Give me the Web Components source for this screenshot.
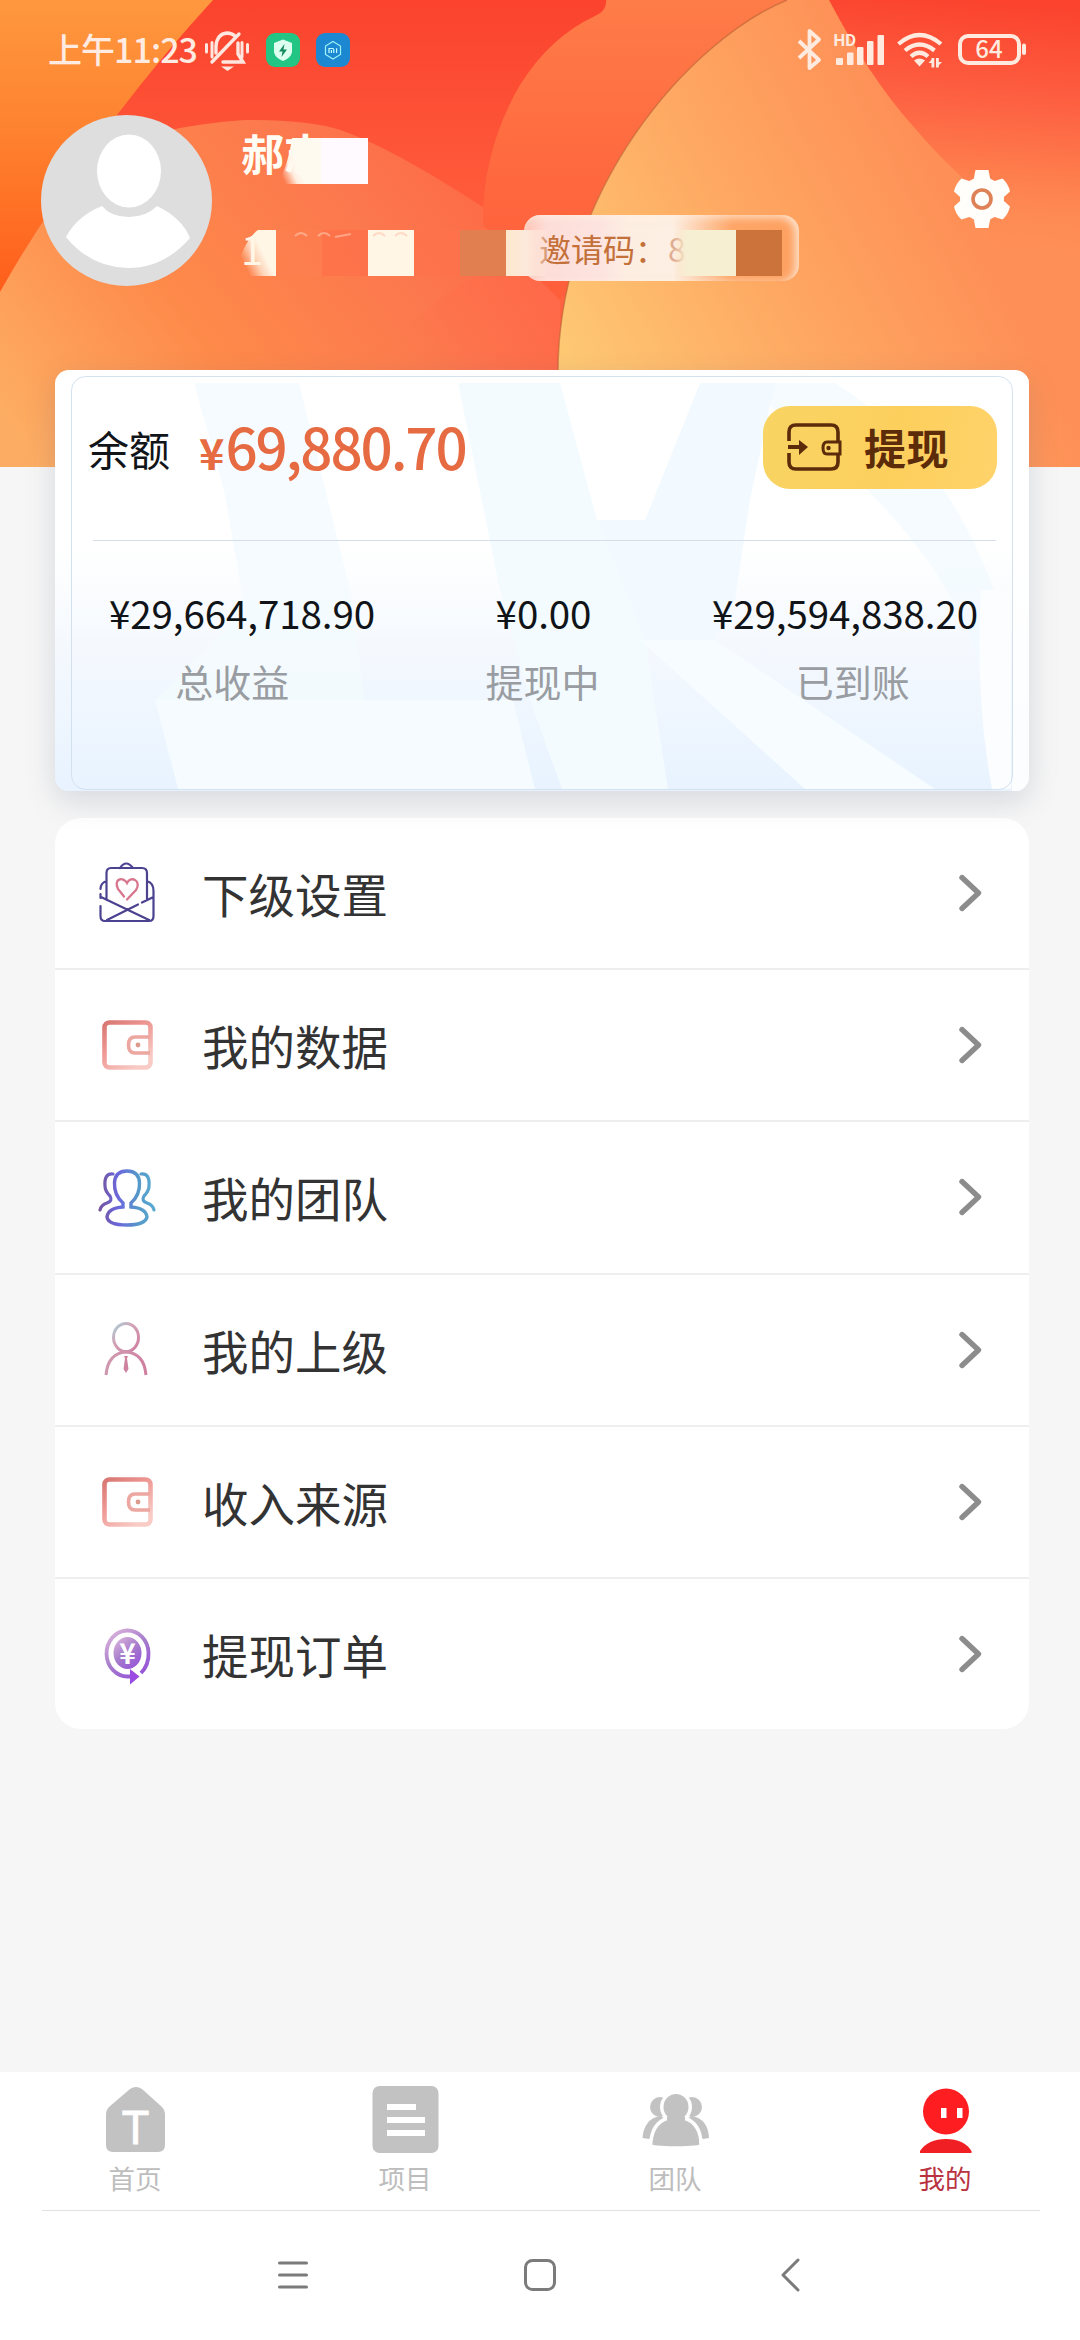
<!DOCTYPE html>
<html lang="zh-CN">
<head>
<meta charset="utf-8">
<title>我的</title>
<style>
html,body{margin:0;padding:0}
body{width:1080px;height:2340px;overflow:hidden;background:#f6f6f6;font-family:"Noto Sans CJK SC","Noto Sans",sans-serif}
</style>
</head>
<body>
<app-screen>
  <status-bar></status-bar>
  <profile-header></profile-header>
  <balance-card></balance-card>
  <menu-list>
    <menu-row icon="mail">下级设置</menu-row>
    <menu-row icon="wallet">我的数据</menu-row>
    <menu-row icon="team">我的团队</menu-row>
    <menu-row icon="boss">我的上级</menu-row>
    <menu-row icon="wallet">收入来源</menu-row>
    <menu-row icon="order" last>提现订单</menu-row>
  </menu-list>
  <tab-bar slot="bottom">
    <tab-item icon="home">首页</tab-item>
    <tab-item icon="project">项目</tab-item>
    <tab-item icon="group">团队</tab-item>
    <tab-item icon="mine" active>我的</tab-item>
  </tab-bar>
  <system-nav slot="bottom"></system-nav>
</app-screen>
<script>
const define = (name, html) => customElements.define(name, class extends HTMLElement {
  constructor() {
    super();
    this.attachShadow({mode: 'open'}).innerHTML = typeof html === 'function' ? html(this) : html;
  }
});

define('hero-art', `
<style>:host{display:block}svg{display:block}</style>
<svg width="1080" height="467" viewBox="0 0 1080 467">
  <defs>
    <linearGradient id="base" x1="0" y1="0" x2="0" y2="1"><stop offset="0" stop-color="#fb432e"/><stop offset=".5" stop-color="#ff5f3d"/><stop offset="1" stop-color="#ff6c48"/></linearGradient>
    <linearGradient id="left" x1="0" y1="0" x2="0" y2="1"><stop offset="0" stop-color="#fe983e"/><stop offset=".45" stop-color="#fe822f"/><stop offset="1" stop-color="#ff5e1b"/></linearGradient>
    <linearGradient id="dome" gradientUnits="userSpaceOnUse" x1="20" y1="440" x2="430" y2="130"><stop offset="0" stop-color="#fdad63"/><stop offset=".4" stop-color="#fe8a4a"/><stop offset=".8" stop-color="#fc774e"/><stop offset="1" stop-color="#fd6c47"/></linearGradient>
    <linearGradient id="fade" gradientUnits="userSpaceOnUse" x1="430" y1="380" x2="560" y2="300"><stop offset="0" stop-color="#ff7048" stop-opacity="0"/><stop offset="1" stop-color="#ff6a4a"/></linearGradient>
    <linearGradient id="band" x1="0" y1="0" x2="0" y2="1"><stop offset="0" stop-color="#fe7c48"/><stop offset=".5" stop-color="#ff6b40"/><stop offset="1" stop-color="#ff5d3b"/></linearGradient>
    <linearGradient id="sun" gradientUnits="userSpaceOnUse" x1="560" y1="350" x2="930" y2="150"><stop offset="0" stop-color="#fec873"/><stop offset=".5" stop-color="#fea963"/><stop offset="1" stop-color="#fe8f56"/></linearGradient>
    <linearGradient id="corner" gradientUnits="userSpaceOnUse" x1="960" y1="0" x2="940" y2="250"><stop offset="0" stop-color="#fb432e"/><stop offset=".35" stop-color="#fd5d40"/><stop offset=".65" stop-color="#fe7b4c"/><stop offset="1" stop-color="#fe8d55" stop-opacity="0"/></linearGradient>
  </defs>
  <rect width="1080" height="467" fill="url(#base)"/>
  <path d="M0 0H213Q165 52 117 115Q45 212 0 292Z" fill="url(#left)"/>
  <path d="M0 292Q45 212 95 150Q170 125 245 120Q310 120 340 130Q400 150 520 232Q560 280 560 467H0Z" fill="url(#dome)"/>
  <path d="M330 467Q370 300 560 240V467Z" fill="url(#fade)"/>
  <path d="M606 0Q607 11 595 16Q550 37 520 85Q482 150 483 225L560 300L800 0Z" fill="url(#band)"/>
  <path d="M787 0C690 40 557 190 558 375V467H1080V0Z" fill="url(#sun)"/>
  <path d="M787 0C690 40 557 190 558 375" fill="none" stroke="#b66336" stroke-opacity=".6" stroke-width="1.4"/>
  <path d="M829 0Q870 78 912 125Q940 158 965 180L1000 260H1080V0Z" fill="url(#corner)"/>
</svg>`);

define('app-screen', `
<style>
:host{display:flex;flex-direction:column;width:1080px;height:2340px;position:relative;background:#f6f6f6;isolation:isolate}
hero-art{position:absolute;left:0;top:0;z-index:-1}
main{flex:1;display:flex;flex-direction:column}
footer{background:#fff;height:268px;display:flex;flex-direction:column}
</style>
<hero-art></hero-art>
<main><slot></slot></main>
<footer><slot name="bottom"></slot></footer>`);

define('status-bar', `
<style>
:host{display:flex;height:100px;box-sizing:border-box;align-items:center;justify-content:space-between;padding:0 53px 0 48px;color:#ffebe2}
div{display:flex;align-items:center}
.time{font-size:34px;line-height:50px;font-weight:500;width:152px;white-space:nowrap;letter-spacing:-.95px;margin-top:-2px}
svg{display:block;overflow:visible}
text{font-family:"Noto Sans CJK SC",sans-serif;font-weight:500}
.app{margin-left:16px}
</style>
<div>
  <span class="time">上午11:23</span>
  <svg style="margin-left:4px" width="46" height="42" viewBox="204 29 46 42" fill="none" stroke="#ffe6df" stroke-width="3.4" stroke-linecap="round">
    <path d="M206.500 44.500V52M212 42.500V57M242 42.500V57M247.500 44.500V52" stroke-width="3"/>
    <path d="M212 62L239 34"/>
    <path d="M216 53V46Q217 34 227 33Q232 33 235 36" />
    <path d="M238 43V54L243 62H223"/>
    <path d="M221 66.500H234L227.500 71Z" fill="#ffe6df" stroke="none"/>
  </svg>
  <svg class="app" width="34" height="34" viewBox="0 0 34 34"><rect width="34" height="34" rx="9" fill="#22c583"/><path d="M17 6.500L26 10V19Q25 25 17 28Q9 25 8 19V10Z" fill="#dcfff0"/><path d="M18.500 11L13 18.500H16.500L15.500 24L21 16.500H17.500Z" fill="#138b5c"/></svg>
  <svg class="app" width="34" height="34" viewBox="0 0 34 34"><rect width="34" height="34" rx="9" fill="#1c88d2"/><path d="M17 8.500L24.500 13V21.500L17 26L9.500 21.500V13Z" fill="none" stroke="#9ff2f2" stroke-width="1.200"/><path d="M13 20V15.500H16.500Q17.800 15.500 17.800 17V20M15.400 17V20M20.600 15.300V20" fill="none" stroke="#c4ffff" stroke-width="1.200"/></svg>
</div>
<div>
  <svg width="230" height="42" viewBox="796 29 230 42" fill="none" stroke="#ffeadf" stroke-linejoin="round">
    <path d="M798 41L818 60L808.500 68V31L818 39.500L798 58" stroke-width="3.800"/>
    <g fill="#ffeadf" stroke="none">
      <text x="832.500" y="45.500" font-size="16.500" style="font-family:Roboto,sans-serif;font-weight:700">HD</text>
      <rect x="835" y="58" width="7" height="7" rx="1"/><rect x="846" y="52.500" width="6.500" height="12.500" rx="1"/><rect x="856" y="47" width="6.500" height="18" rx="1"/><rect x="866" y="41" width="6.500" height="24" rx="1"/><rect x="876.500" y="35" width="6.500" height="30" rx="1"/>
      <path d="M913 60.500Q918.500 56.500 924 60.500L918.500 66.500Z"/>
      <path d="M927.500 63L932 58V63ZM941 62L936 67V62Z"/>
      <rect x="930.500" y="58" width="2.800" height="9.500"/><rect x="935" y="58" width="2.800" height="9.500"/>
    </g>
    <path d="M897.500 44Q918.500 26 940 44M904 50.500Q918.500 38.500 933.500 50.500M910 56.500Q918.500 49 927 56.500" stroke-width="4.200"/>
    <rect x="959" y="36" width="59" height="27" rx="8" stroke-width="4"/>
    <path d="M1023 45.500V53" stroke-width="4" stroke-linecap="round"/>
    <text x="988" y="58" text-anchor="middle" font-size="24" fill="#ffeadf" stroke="none">64</text>
  </svg>
</div>`);

define('mosaic-cover', `
<style>:host{display:block}svg{display:block}</style>
<svg width="580" height="160" viewBox="230 130 580 160">
  <defs>
    <linearGradient id="a" gradientUnits="userSpaceOnUse" x1="279" y1="170" x2="296" y2="162"><stop offset="0" stop-color="#fff8ec" stop-opacity="0"/><stop offset=".6" stop-color="#fffaf0" stop-opacity=".9"/><stop offset="1" stop-color="#fffaf0"/></linearGradient>
    <linearGradient id="b" gradientUnits="userSpaceOnUse" x1="240" y1="256" x2="260" y2="246"><stop offset="0" stop-color="#fff6e6" stop-opacity="0"/><stop offset="0.550" stop-color="#fff6e6" stop-opacity=".7"/><stop offset="1" stop-color="#fff6e6"/></linearGradient>
    <linearGradient id="c" x1="0" x2="1"><stop offset="0" stop-color="#fde7cd"/><stop offset=".5" stop-color="#fde9dc"/><stop offset="1" stop-color="#fde9dc" stop-opacity=".3"/></linearGradient>
    <linearGradient id="d" x1="0" x2="1"><stop offset="0" stop-color="#f8eed2" stop-opacity="0"/><stop offset=".2" stop-color="#f7efd3"/><stop offset="1" stop-color="#f6efd1"/></linearGradient>
  </defs>
  <path d="M278 184Q289 162 292 138H322V184Z" fill="url(#a)"/>
  <rect x="321" y="138" width="47" height="46" fill="#fffaff"/>
  <path d="M234 276Q244 240 258 230H276V276Z" fill="url(#b)"/>
  <rect x="276" y="230" width="46" height="46" fill="#fe7e50" opacity=".65"/>
  <rect x="322" y="230" width="46" height="46" fill="#fe704a" opacity=".75"/>
  <rect x="368" y="230" width="46" height="46" fill="#fff6e6"/>
  <rect x="414" y="230" width="46" height="46" fill="#fe724b" opacity=".7"/>
  <rect x="460" y="230" width="46" height="46" fill="#e27f50"/>
  <rect x="506" y="230" width="41" height="46" fill="url(#c)"/>
  <rect x="674" y="230" width="62" height="46" fill="url(#d)"/>
  <rect x="736" y="230" width="46" height="46" fill="#cb733a"/>
  <g fill="none" stroke="#ffc6ae" stroke-width="2" opacity=".6">
    <path d="M295 236Q301 230 307 236M318 236Q324 230 330 236M335 237L351 234M373 236Q379 230 385 236M395 236Q401 230 407 236"/>
  </g>
</svg>`);

define('profile-header', `
<style>
:host{display:flex;position:relative;height:270px;padding:0 66px 0 41px;align-items:flex-start}
.avatar{margin-top:15px;flex:none}
.info{flex:1;margin-left:29px;padding-top:20px}
.name{font-size:43px;line-height:70px;height:70px;font-weight:700;color:#fffdf4;margin-top:-3px}
.line{display:flex;align-items:flex-start;margin-top:28px}
.phone{width:283px;font-size:40px;line-height:66px;color:#fff6e6}
.code{width:275px;height:66px;box-sizing:border-box;padding-left:15px;border-radius:16px;font-size:32px;line-height:66px;color:#c4703a;white-space:nowrap;
 box-shadow:inset -4px 2px 8px rgba(255,240,225,.85);
 background:linear-gradient(90deg,#fec3b4 0,#fdddd8 8%,#fde4e0 28%,#fdeee2 38%,#fdefe3 54%,#fea667 76%,#fda060)}
.code i{font-style:normal;color:#dfad92;margin-left:1px}
mosaic-cover{position:absolute;left:230px;top:30px}
.gear{margin-top:69px;margin-right:4px}
svg{display:block}
</style>
<svg class="avatar" width="171" height="171" viewBox="41 115 171 171"><circle cx="126.500" cy="200.500" r="85.500" fill="#dedede"/><ellipse cx="129" cy="171" rx="32" ry="36.500" fill="#fff"/><path d="M66 237Q77 216 102 206Q111 217 129 217Q146 217 157 206Q182 218 190 238Q164 268 128 268Q90 267 66 237Z" fill="#fff"/></svg>
<div class="info">
  <div class="name">郝志</div>
  <div class="line"><div class="phone">1</div><div class="code">邀请码：<i>8</i></div></div>
</div>
<mosaic-cover></mosaic-cover>
<svg class="gear" width="56" height="60" viewBox="-28 -30 56 60">
  <g fill="#fffefa"><circle r="22"/>
    <path d="M-9 -16L-6.500 -29H6.500L9 -16ZM-9 16L-6.500 29H6.500L9 16Z"/>
    <path transform="rotate(60)" d="M-10 -16L-7.500 -28Q0 -30.500 7.500 -28L10 -16ZM-10 16L-7.500 28Q0 30.500 7.500 28L10 16Z"/>
    <path transform="rotate(120)" d="M-10 -16L-7.500 -28Q0 -30.500 7.500 -28L10 -16ZM-10 16L-7.500 28Q0 30.500 7.500 28L10 16Z"/></g>
  <circle r="9" fill="none" stroke="#df8157" stroke-width="3.600"/>
</svg>`);

define('balance-card', `
<style>
:host{display:block;position:relative;margin:0 51px 0 55px;height:421px;border-radius:14px;background:linear-gradient(#fff 0,#fff 42%,#f3f8fe 70%,#e8f3ff 100%);box-shadow:0 10px 30px rgba(90,100,130,.2);isolation:isolate}
.mark{position:absolute;left:0;top:0;z-index:-1;display:block;border-radius:14px}
.top{display:flex;align-items:center;height:170px;box-sizing:border-box;padding:0 32px 14px 33px}
.label{font-size:41px;line-height:60px;width:111px;color:#111418;margin-top:-1px}
.amt{color:#e66b42;font-weight:500;display:flex;align-items:baseline;line-height:80px;font-size:56.500px;letter-spacing:-2.1px}
.amt b{font-size:43px;font-weight:700;margin-right:1px;letter-spacing:0}
.amount-wrap{flex:1}
.btn{width:234px;height:83px;margin-top:-2px;border-radius:27px;background:linear-gradient(100deg,#f8d463,#fdcf5d 60%,#ffd36b);display:flex;align-items:center;font-size:42px;font-weight:700;color:#5c2b0a;letter-spacing:.5px}
.btn svg{margin:0 22px 0 23px}
.btn span{margin-top:-2px}
.rule{height:1px;background:#d5dfea;margin:0 33px 0 38px}
.vals,.labs{display:flex}
.vals{font-size:38.500px;line-height:56px;color:#101418;padding:43px 0 0;justify-content:space-between;margin:0 51px 0 54px;letter-spacing:-.08px}
.labs{font-size:38px;line-height:54px;color:#999da2;margin:14px 21px 0 22px}
.labs span{flex:1;text-align:center}
</style>
<svg class="mark" width="974" height="421" viewBox="55 370 974 421">
  <path d="M194 383H299L350 590L365 700H155L245 610L224 490Z" fill="#f3fafe" opacity=".85"/>
  <path d="M155 700H513L535 789H178Z" fill="#f5fbff"/>
  <path d="M458 383H560L597 520L645 640L668 789H562L530 700L500 590Z" fill="#f3fbff"/>
  <path d="M700 383H775L750 500L735 600L715 640H645L597 520H645Z" fill="#f3faff"/>
  <path d="M740 383H835Q960 460 1010 640V789H1000L975 650Q930 520 740 383Z" fill="#f2f9ff" opacity=".75"/>
  <path d="M640 640H715L935 789H805Z" fill="#f6fcff"/>
  <path d="M981 590H1011V789H992Q975 700 981 590Z" fill="#fcfdff"/>
  <path d="M1012 376H1029V791H1012Z" fill="#fff" opacity=".8"/>
  <rect x="71.500" y="376.500" width="941" height="413" rx="14" fill="none" stroke="#d3e0ee"/>
</svg>
<div class="top">
  <span class="label">余额</span>
  <div class="amount-wrap"><div class="amt"><b>¥</b>69,880.70</div></div>
  <div class="btn"><svg width="56" height="50" viewBox="0 0 56 50" fill="none" stroke="#5c2b0a" stroke-width="3.600"><path d="M3 19V10Q3 3 10 3H45Q52 3 52 10V20M52 32V40Q52 47 45 47H10Q3 47 3 40V31"/><path d="M2 25H14" stroke-width="4"/><path d="M13 18L22 25L13 33Z" fill="#5c2b0a" stroke="none"/><path d="M54 20H41Q37 20 37 26Q37 32 41 32H54Z" stroke-width="3"/><circle cx="42.500" cy="26" r="2.200" fill="#5c2b0a" stroke="none"/></svg><span>提现</span></div>
</div>
<div class="rule"></div>
<div class="vals"><span>¥29,664,718.90</span><span>¥0.00</span><span>¥29,594,838.20</span></div>
<div class="labs"><span>总收益</span><span>提现中</span><span>已到账</span></div>`);

define('menu-list', `
<style>:host{display:flex;flex-direction:column;margin:27px 51px 0 55px;height:911px;background:#fff;border-radius:26px}</style><slot></slot>`);

const wallet = `<defs><linearGradient id="g" x1="0" y1="0" x2=".7" y2="1"><stop offset="0" stop-color="#d87672"/><stop offset=".45" stop-color="#ee9894"/><stop offset="1" stop-color="#f8cbc5"/></linearGradient></defs>
<rect x="9.500" y="7.500" width="46" height="45" rx="5" fill="none" stroke="url(#g)" stroke-width="4.600"/><path d="M55 22H40Q33.500 22 33.500 30Q33.500 38 40 38H55" fill="none" stroke="#eda7a1" stroke-width="3.600"/><circle cx="43" cy="30" r="2.400" fill="#dc9a8c"/>`;
const menuIcons = {
  mail: `<g fill="none" stroke="#4b4290" stroke-width="2.200" stroke-linecap="round" stroke-linejoin="round"><path d="M11.500 37V10Q11.500 5 16 5H47Q52 5 52 10V36M25 5Q31 -4 38 5M52 18Q58.500 20 58.500 28V53Q58.500 58 54 58H10Q5.500 58 5.500 53V43M11.500 18Q5.500 20 5.500 26M5.500 31V35M58.500 34L47 39.500M43 41.500L12 57M6 34L54 57"/></g><path d="M29 33.500L23 26C18 16 28 13 32 20C36 12 47 18 41 27L32 36.500" fill="none" stroke="#d7758d" stroke-width="2.300" stroke-linecap="round"/>`,
  wallet,
  team: `<defs><linearGradient id="g" gradientUnits="userSpaceOnUse" x1="4" y1="30" x2="60" y2="30"><stop offset="0" stop-color="#75549d"/><stop offset=".35" stop-color="#6a68dd"/><stop offset=".7" stop-color="#5598c9"/><stop offset="1" stop-color="#5aabd2"/></linearGradient></defs><g fill="none" stroke="url(#g)" stroke-width="3.200" stroke-linecap="round"><path d="M18 7Q9 6 10 19Q10 24 15 29Q18 34 12 36Q6 38 5 43M46 7Q55 6 54 19Q54 24 49 29Q46 34 52 36Q58 38 59 43"/><path d="M28 40V36Q19 28 19.500 16Q20 4 32 4Q44 4 44.500 16Q45 28 36 36V40Q51 41 52 50Q50 58 32 58Q13 58 12 50Q13 41 28 40Z" stroke-width="3.400"/></g>`,
  boss: `<defs><linearGradient id="g" x1="0" y1="0" x2=".9" y2="1"><stop offset="0" stop-color="#a7d4d9"/><stop offset=".4" stop-color="#d2a3b7"/><stop offset="1" stop-color="#cf7fa0"/></linearGradient><linearGradient id="h" x1="0" y1="0" x2="1" y2=".4"><stop offset="0" stop-color="#cf9fb3"/><stop offset="1" stop-color="#cf7fa0"/></linearGradient></defs><g fill="none" stroke="url(#g)" stroke-width="3"><ellipse cx="31" cy="17.500" rx="12.500" ry="14"/><path stroke="url(#h)" d="M11 55Q13 33 31 32Q49 33 51 55"/></g><path d="M29 36H33L32 38.500L33.500 49L31 53L28.500 49L30 38.500Z" fill="#cd819f"/>`,
  order: `<defs><linearGradient id="g" x1=".1" y1="0" x2=".8" y2="1"><stop offset="0" stop-color="#dcb4dc"/><stop offset=".5" stop-color="#a77dcc"/><stop offset="1" stop-color="#9554d8"/></linearGradient></defs><path d="M46 49Q54 41 53.500 28.500A21 23 0 1 0 33 52.500H37" fill="none" stroke="url(#g)" stroke-width="3.800"/><ellipse cx="32.500" cy="29" rx="14" ry="16" fill="url(#g)"/><path d="M35 45L44.500 52.500L35 60.500Z" fill="#9a4be0"/><text x="32.500" y="39.500" text-anchor="middle" font-size="28" font-weight="700" fill="#fff" font-family="Noto Sans CJK SC,sans-serif">¥</text>`
};
define('menu-row', el => `
<style>
:host{display:flex;flex:1;align-items:center;box-sizing:border-box;padding:0 47px 0 40px;font-size:46.500px;line-height:66px;color:#333;border-bottom:${el.hasAttribute('last') ? '0' : '2px solid #eee'}}
.ic{margin-right:43px;flex:none}
.t{flex:1}
svg{display:block;overflow:visible}
</style>
<svg class="ic" width="64" height="60" viewBox="0 0 64 60">${menuIcons[el.getAttribute('icon')]}</svg>
<span class="t"><slot></slot></span>
<svg width="24" height="38" viewBox="0 0 24 38" fill="none" stroke="#8c8c8c" stroke-width="5.400" stroke-linecap="round" stroke-linejoin="round"><path d="M4 3.500L20.500 19L4 34.500"/></svg>`);

define('tab-bar', `
<style>:host{display:flex;height:138px;position:relative;background:#fff}:host::after{content:"";position:absolute;left:42px;right:40px;bottom:-1px;height:1px;background:#e2e2e2}</style><slot></slot>`);
const tabIcons = {
  home: `<path d="M8 22L29 4Q35 0 41 4L61 22Q64 25 64 30V60Q64 67 57 67H12Q5 67 5 60V30Q5 25 8 22Z" fill="#c2c2c2"/><text x="34.500" y="59.500" text-anchor="middle" font-size="49" fill="#fff" stroke="#fff" stroke-width="1" font-family="Liberation Sans,sans-serif" transform="translate(34.500 0) scale(.92 1) translate(-34.500 0)">T</text>`,
  project: `<rect x="1.500" y="1" width="66" height="67" rx="7" fill="#c2c2c2"/><path d="M16 22H45M16 35H54M16 48H54" stroke="#fff" stroke-width="6"/>`,
  group: `<g fill="#c2c2c2"><circle cx="19" cy="22" r="10"/><path d="M1.500 53Q3 34 19 31L28 36L8 54Z"/><circle cx="51" cy="22" r="10"/><path d="M68 53Q67 34 51 31L42 36L62 54Z"/><g stroke="#fff" stroke-width="3.500"><path d="M9.500 62Q10 38 27 33H43Q60 38 60 60Q60 63 35 63Q10 63 9.500 60Z"/></g><circle cx="35" cy="22" r="16" fill="#fff"/><path d="M26 32H44V40H26Z"/><ellipse cx="35" cy="22" rx="12.500" ry="13"/></g>`,
  mine: `<circle cx="35" cy="26.500" r="23" fill="#fe1d20"/><path d="M30 23H35.500V33H30ZM46 23H51.500V33H46Z" fill="#fff"/><path d="M9 68V66Q17 54 35 54Q53 54 60.500 66V68Z" fill="#f01f24"/>`
};
define('tab-item', el => `
<style>
:host{flex:1;display:flex;flex-direction:column;align-items:center;padding-top:13px;font-size:26.500px;line-height:36px;color:${el.hasAttribute('active') ? '#b8323f' : '#bdbdbd'}}
svg{display:block;margin-bottom:5px}
</style>
<svg width="69" height="70" viewBox="0 0 69 70">${tabIcons[el.getAttribute('icon')]}</svg><span><slot></slot></span>`);

define('system-nav', `
<style>:host{display:flex;flex:1;justify-content:space-between;align-items:center;padding:0 272px 0 276px;background:#fff}svg{display:block}</style>
<svg width="34" height="34" viewBox="0 0 34 34" stroke="#7b7b7b" stroke-width="3" stroke-linecap="round"><path d="M3.500 5H30.500M3.500 17H30.500M3.500 29H30.500"/></svg>
<svg style="margin-right:4px" width="34" height="34" viewBox="0 0 34 34"><rect x="2.500" y="2.500" width="29" height="29" rx="7" fill="none" stroke="#7b7b7b" stroke-width="3"/></svg>
<svg width="34" height="34" viewBox="0 0 34 34" fill="none" stroke="#7b7b7b" stroke-width="3" stroke-linecap="round" stroke-linejoin="round"><path d="M24 2L9 17L24 32"/></svg>`);
</script>
</body>
</html>
